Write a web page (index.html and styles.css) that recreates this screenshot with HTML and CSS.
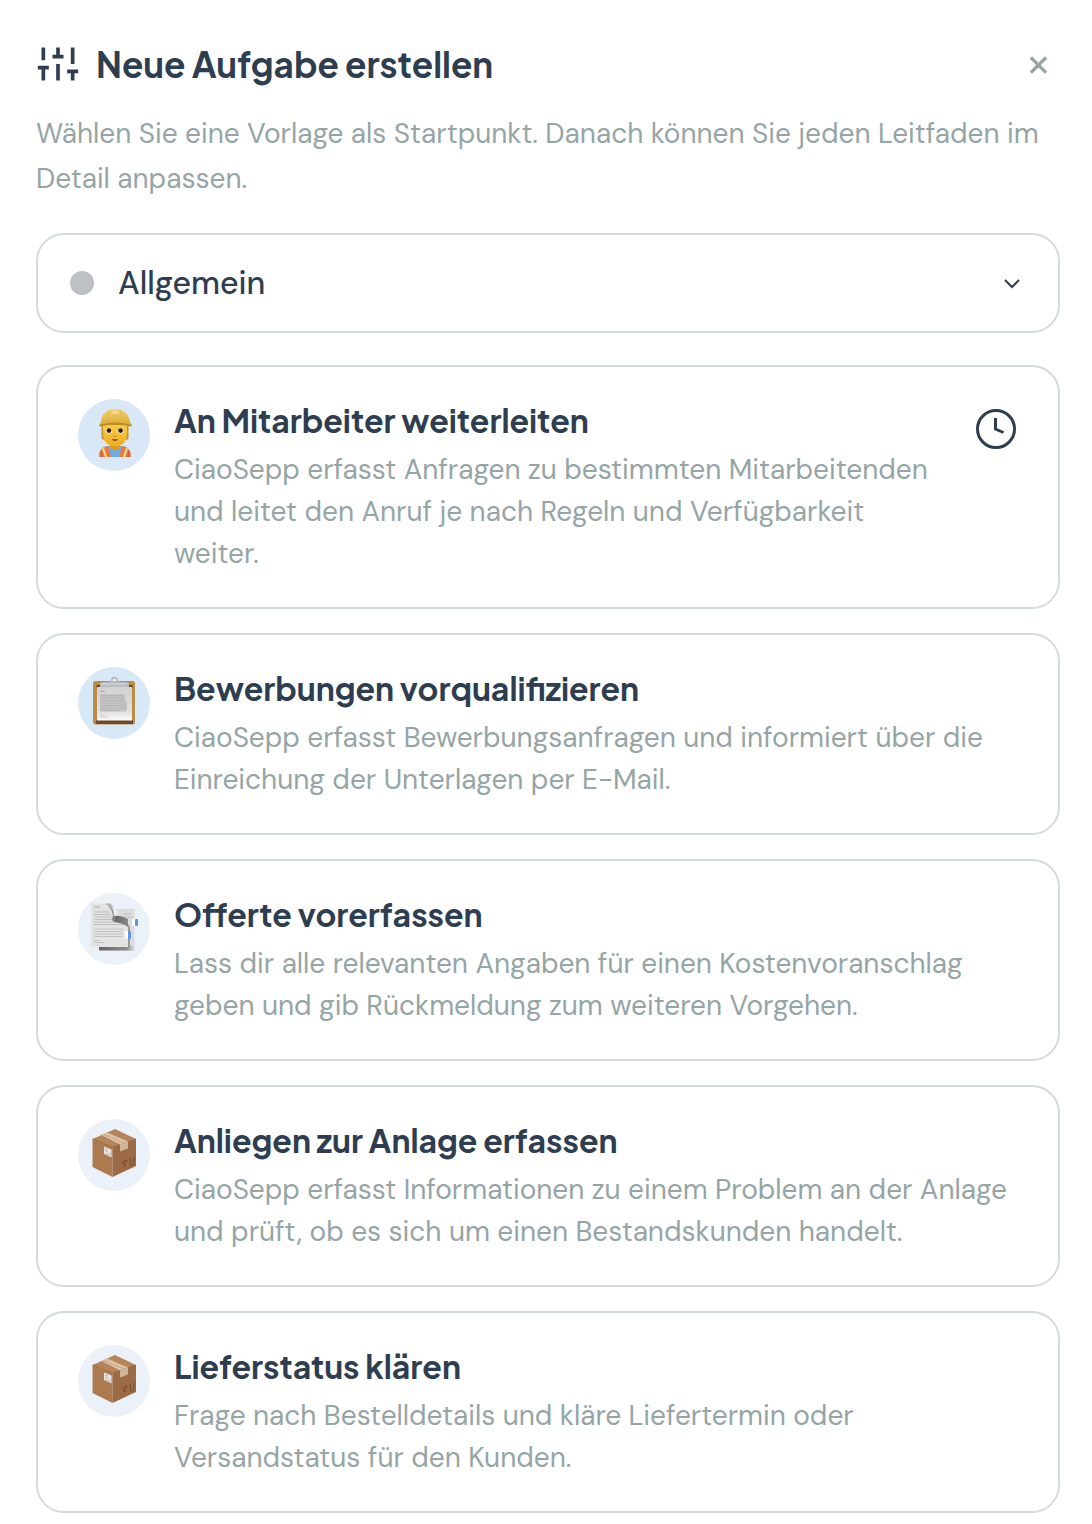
FILE: index.html
```html
<!DOCTYPE html>
<html lang="de">
<head>
    <meta charset="UTF-8">
    <meta name="viewport" content="width=device-width, initial-scale=1.0">
    <title>Neue Aufgabe erstellen</title>
    <link rel="stylesheet" href="styles.css">
</head>
<body>

<main class="dialog">
    <header class="dialog-header">
        <svg class="sliders-icon" viewBox="0 0 24 24" aria-hidden="true">
            <path d="M4 21v-7M4 10V3M12 21v-9M12 8V3M20 21v-5M20 12V3M1 14h6M9 8h6M17 16h6"/>
        </svg>
        <h1>Neue Aufgabe erstellen</h1>
        <button type="button" class="close-button" aria-label="Schliessen">
            <svg viewBox="0 0 24 24" aria-hidden="true"><path d="M4.500 6l14 14M18.500 6l-14 14"/></svg>
        </button>
    </header>

    <p class="intro">Wählen Sie eine Vorlage als Startpunkt. Danach können Sie jeden Leitfaden im Detail anpassen.</p>

    <div class="category">
        <span class="category-dot"></span>
        <select id="category" aria-label="Kategorie">
            <option>Allgemein</option>
        </select>
        <svg class="chevron" viewBox="0 0 24 24" aria-hidden="true"><path d="M3 9l7 7 7-7"/></svg>
    </div>

    <div class="template-list">
        <button type="button" class="template">
            <span class="template-icon strong">
                <!-- construction worker -->
                <svg viewBox="0 0 72 72" aria-hidden="true">
                    <defs>
                        <linearGradient id="hat" x1="0" y1="0" x2="0" y2="1">
                            <stop offset="0" stop-color="#f3d475"/>
                            <stop offset="1" stop-color="#d9a52f"/>
                        </linearGradient>
                        <linearGradient id="face" x1="0" y1="0" x2="0" y2="1">
                            <stop offset="0" stop-color="#f8cc45"/>
                            <stop offset="1" stop-color="#edae25"/>
                        </linearGradient>
                    </defs>
                    <path d="M23.500 25h27v13q1 3-4 3H28q-5 0-4.500-3z" fill="#c4902c"/>
                    <path d="M21 58q0-9 8-11h16q8 2 8 11z" fill="#6bace8"/>
                    <path d="M32 43h10v6q-5 5-10 0z" fill="#dc9c22"/>
                    <path d="M25 26h24v8q0 13-12 13T25 34z" fill="url(#face)"/>
                    <path d="M21 58q0-7 5-10l4-1 3 11zM53 58q0-7-5-10l-4-1-3 11z" fill="#ef7742"/>
                    <path d="M25 49l3 9M49 49l-3 9" stroke="#e9e58c" stroke-width="2"/>
                    <path d="M23 52l1 6M51 52l-1 6" stroke="#c84f3b" stroke-width="1"/>
                    <ellipse cx="31" cy="31.800" rx="3" ry="2.600" fill="#fff"/>
                    <ellipse cx="42.600" cy="31.800" rx="3" ry="2.600" fill="#fff"/>
                    <circle cx="31" cy="31.600" r="2.400" fill="#35200f"/>
                    <circle cx="42.600" cy="31.600" r="2.400" fill="#35200f"/>
                    <path d="M35.500 37q1.500 1 3 0" stroke="#c28420" fill="none"/>
                    <path d="M33.500 40.300h7q-3.500 3.500-7 0z" fill="#7b3a1c"/>
                    <path d="M23 23q1-13 14-13t15 13l2 4q-3 0-6-1-11-2-21 0-4 1-6 1z" fill="url(#hat)"/>
                    <path d="M21 26q16-5 33 0l-1 1.500q-15-4-31 0z" fill="#b98a24"/>
                    <path d="M32 12q-3 4-3 10M42 12q3 4 3 10" stroke="#dfb548" stroke-width="1" fill="none"/>
                    <path d="M34 12q3-1 6 0v3h-6z" fill="#f9e49b" opacity=".6"/>
                </svg>
            </span>
            <span class="template-text">
                <span class="template-title">An Mitarbeiter weiterleiten</span>
                <span class="template-description">CiaoSepp erfasst Anfragen zu bestimmten Mitarbeitenden und leitet den Anruf je nach Regeln und Verfügbarkeit weiter.</span>
            </span>
            <svg class="clock-icon" viewBox="0 0 44 44" aria-hidden="true">
                <circle cx="22" cy="22" r="18.500"/>
                <path d="M21.500 11v11l8 3.500"/>
            </svg>
        </button>

        <button type="button" class="template">
            <span class="template-icon strong">
                <!-- clipboard -->
                <svg viewBox="0 0 72 72" aria-hidden="true">
                    <defs>
                        <linearGradient id="sheet" x1="0" y1="0" x2="0" y2="1">
                            <stop offset="0" stop-color="#d2d2d2"/>
                            <stop offset=".7" stop-color="#dedede"/>
                            <stop offset="1" stop-color="#fafafa"/>
                        </linearGradient>
                    </defs>
                    <rect x="15" y="14" width="42" height="43.500" rx="2.500" fill="#b98c48"/>
                    <rect x="18" y="53" width="37" height="4" fill="#70492a"/>
                    <rect x="18.500" y="18" width="36" height="3" fill="#70492a"/>
                    <rect x="19" y="20" width="35" height="33.500" fill="url(#sheet)"/>
                    <circle cx="36.500" cy="13.500" r="2.800" fill="#e9eef3" stroke="#a9b1ba" stroke-width="1.500"/>
                    <path d="M22 20v-3q0-2 3-2h6l2-1h7l2 1h6q3 0 3 2v3z" fill="#b9bcc1"/>
                    <path d="M23 17h26" stroke="#d9dce0"/>
                    <path d="M22 24.300h5" stroke="#a5a5a5"/>
                    <path d="M22 27h24v2.500h1v6h2v5h-1v4H22z" fill="#c2c2c2"/>
                    <path d="M22 28.500h25M22 31h24M22 33.500h26M22 36h27M22 38.500h26M22 41h27M22 43.500h19" stroke="#b7b7b7" stroke-width="1.200"/>
                    <path d="M22 48h5M22 50h8" stroke="#c4c4c4" stroke-width=".8"/>
                </svg>
            </span>
            <span class="template-text">
                <span class="template-title">Bewerbungen vorqualifizieren</span>
                <span class="template-description">CiaoSepp erfasst Bewerbungsanfragen und informiert über die Einreichung der Unterlagen per E-Mail.</span>
            </span>
        </button>

        <button type="button" class="template">
            <span class="template-icon">
                <!-- pages with bookmark tabs -->
                <svg viewBox="0 0 72 72" aria-hidden="true">
                    <defs>
                        <linearGradient id="flap" x1="0" y1="0" x2="1" y2="1">
                            <stop offset="0" stop-color="#a8a8a8"/>
                            <stop offset=".4" stop-color="#f3f3f3"/>
                            <stop offset="1" stop-color="#bdbdbd"/>
                        </linearGradient>
                        <linearGradient id="fold" x1="0" y1="0" x2="1" y2="0">
                            <stop offset="0" stop-color="#8e8e8e" stop-opacity=".3"/>
                            <stop offset=".5" stop-color="#6a6a6a"/>
                            <stop offset="1" stop-color="#8a8a8a"/>
                        </linearGradient>
                        <linearGradient id="shadow" x1="0" y1="0" x2="1" y2="0">
                            <stop offset="0" stop-color="#666"/>
                            <stop offset=".8" stop-color="#8c8c8c"/>
                            <stop offset="1" stop-color="#dcdcdc"/>
                        </linearGradient>
                    </defs>
                    <path d="M21 16h35.500v41.500H21z" fill="#dcdcdc"/>
                    <path d="M21 53h35v4.500H21z" fill="url(#shadow)"/>
                    <path d="M49 30l3 4v20h-3z" fill="#989898"/>
                    <path d="M45 21h8M49 24h5" stroke="#bbb"/>
                    <path d="M13 10.500h18l5 12 14 9V54H13z" fill="#e3e3e3"/>
                    <path d="M16 14h6" stroke="#aaa"/>
                    <path d="M16 19h15M16 21.500h17M16 24h19M16 26.500h18M16 29h26M16 31.500h30" stroke="#bebebe" stroke-width="1.200"/>
                    <path d="M16 36h29M16 38.500h28M16 41h29M16 43.500h28M16 47.500h6M16 49.500h10" stroke="#c2c2c2"/>
                    <path d="M27 10.500h5q5 4 5 12 8 0 13 3.500v8q-5-4-13-5-5-1-2-6-1-8-8-12.500z" fill="url(#fold)"/>
                    <path d="M30 10.500q4 0 6 3.500 5 7 14 12-6-4-14-3 0-8-6-12.500z" fill="url(#flap)"/>
                    <rect x="54" y="26" width="3" height="7" rx="1" fill="#fff"/>
                    <rect x="57" y="26" width="3" height="7" rx="1" fill="#5a96e6"/>
                    <rect x="47" y="38" width="3" height="8" rx="1" fill="#fff"/>
                    <rect x="50" y="38" width="3" height="8" rx="1" fill="#5a96e6"/>
                </svg>
            </span>
            <span class="template-text">
                <span class="template-title">Offerte vorerfassen</span>
                <span class="template-description">Lass dir alle relevanten Angaben für einen Kostenvoranschlag geben und gib Rückmeldung zum weiteren Vorgehen.</span>
            </span>
        </button>

        <button type="button" class="template">
            <span class="template-icon">
                <!-- parcel, used again by the last template -->
                <svg viewBox="0 0 72 72" aria-hidden="true">
                    <g id="parcel">
                        <path d="M14.500 20l20 8v30l-20-10z" fill="#ad7a50"/>
                        <path d="M34.500 28l23.500-8v27L34.500 58z" fill="#9c6b45"/>
                        <path d="M14.500 20l22.500-10 21 10-23.500 8z" fill="#b58559"/>
                        <path d="M14.500 20l20 8 23.500-8" fill="none" stroke="#8b5a38" stroke-width=".7"/>
                        <path d="M23.500 16l5.500-2.500L50 22.500l-8 3z" fill="#dbc3a7"/>
                        <path d="M25.500 15.200l21 9" stroke="#c9ac8c" stroke-width="1.200"/>
                        <path d="M42 25.500l8-3v7l-8 3z" fill="#cfb699"/>
                        <path d="M26 27.500l7.500 3v8L26 35z" fill="#e8e7e3"/>
                        <path d="M27 30l3 1M27 32l3 1.200M31 34l2 1M27 34.500l5 2.300" stroke="#a3a39f" stroke-width=".8"/>
                        <path d="M44 43l5-2.300-1 3-2 1zM46 44v3l2-1M52.500 39v6M56 37.500v6M51.500 47l5-2.500" stroke="#6b4730" stroke-width=".8" fill="none"/>
                    </g>
                </svg>
            </span>
            <span class="template-text">
                <span class="template-title">Anliegen zur Anlage erfassen</span>
                <span class="template-description">CiaoSepp erfasst Informationen zu einem Problem an der Anlage und prüft, ob es sich um einen Bestandskunden handelt.</span>
            </span>
        </button>

        <button type="button" class="template">
            <span class="template-icon">
                <svg viewBox="0 0 72 72" aria-hidden="true"><use href="#parcel"/></svg>
            </span>
            <span class="template-text">
                <span class="template-title">Lieferstatus klären</span>
                <span class="template-description">Frage nach Bestelldetails und kläre Liefertermin oder Versandstatus für den Kunden.</span>
            </span>
        </button>
    </div>
</main>

</body>
</html>
```
FILE: styles.css
```css
body {
    margin: 0;
    background-color: #fff;
    color: #2e3e50;
    font-family: "DM Sans", "Open Sans", sans-serif;
}

.dialog {
    padding: 40px 32px 12px 36px;
}

.dialog-header {
    display: flex;
    align-items: center;
    gap: 16px;
    height: 48px;
}

.sliders-icon {
    width: 44px;
    height: 44px;
    fill: none;
    stroke: currentColor;
    stroke-width: 2;
}

h1 {
    flex: 1;
    margin: 0;
    font-family: "Plus Jakarta Sans", "Open Sans", sans-serif;
    font-size: 35px;
    font-weight: 700;
    line-height: 48px;
}

.close-button {
    display: flex;
    padding: 8px;
    border: none;
    background: none;
    color: #95a5a6;
    cursor: pointer;
}

.close-button svg {
    width: 26px;
    height: 26px;
    fill: none;
    stroke: currentColor;
    stroke-width: 3;
}

.intro {
    margin: 23px 0 32px;
    color: #95a5a6;
    font-size: 28px;
    line-height: 45px;
}

.category {
    display: flex;
    align-items: center;
    gap: 24px;
    height: 96px;
    padding: 0 32px;
    border: 2px solid #d5dbdb;
    border-radius: 28px;
}

.category-dot {
    width: 24px;
    height: 24px;
    border-radius: 50%;
    background-color: #bdc1c6;
}

.category select {
    flex: 1;
    align-self: stretch;
    padding: 0;
    border: none;
    outline: none;
    background: none;
    appearance: none;
    color: inherit;
    font: inherit;
    font-size: 32px;
    font-weight: 500;
    cursor: pointer;
}

.chevron {
    width: 24px;
    height: 24px;
    fill: none;
    stroke: currentColor;
    stroke-width: 2;
    pointer-events: none;
}

.template-list {
    display: flex;
    flex-direction: column;
    gap: 24px;
    margin-top: 32px;
}

.template {
    display: flex;
    align-items: flex-start;
    gap: 24px;
    padding: 32px 40px;
    border: 2px solid #d5dbdb;
    border-radius: 28px;
    background-color: #fff;
    color: inherit;
    font: inherit;
    text-align: left;
    cursor: pointer;
}

.template:hover {
    border-color: #95a5a6;
}

.template-icon {
    flex: none;
    width: 72px;
    height: 72px;
    border-radius: 50%;
    background-color: #ebf1f8;
}

.template-icon.strong {
    background-color: #d9e8f7;
}

.template-icon svg {
    display: block;
}

.template-text {
    flex: 1;
}

.template-title {
    display: block;
    margin-bottom: 8px;
    font-family: "Plus Jakarta Sans", "Open Sans", sans-serif;
    font-size: 32px;
    font-weight: 700;
    line-height: 42px;
}

.template-description {
    display: block;
    color: #95a5a6;
    font-size: 28px;
    line-height: 42px;
}

.clock-icon {
    flex: none;
    width: 44px;
    height: 44px;
    margin-top: 8px;
    fill: none;
    stroke: currentColor;
    stroke-width: 3;
}
```
